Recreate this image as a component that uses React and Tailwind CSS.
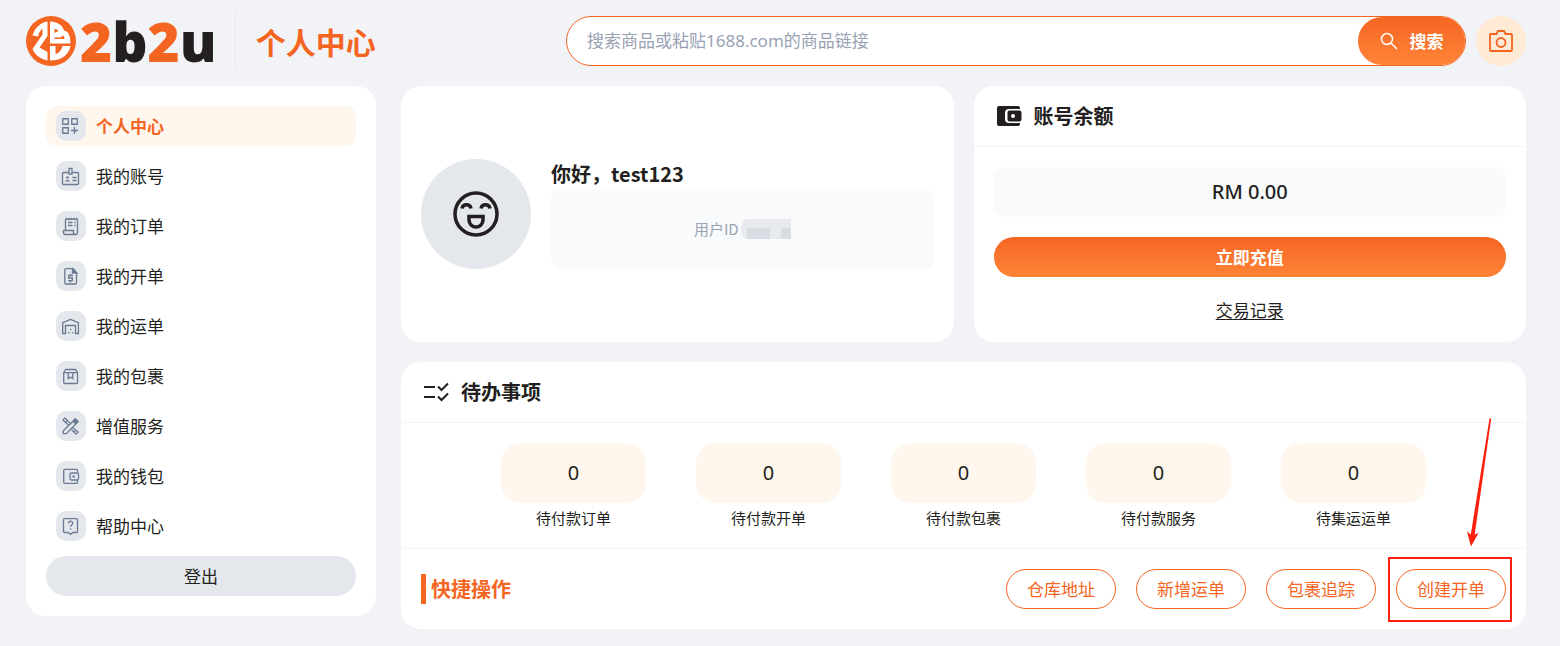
const menu = [
  { label: "个人中心", icon: "dashboard", active: true },
  { label: "我的账号", icon: "badge" },
  { label: "我的订单", icon: "receipt" },
  { label: "我的开单", icon: "invoice" },
  { label: "我的运单", icon: "warehouse" },
  { label: "我的包裹", icon: "parcel" },
  { label: "增值服务", icon: "tools" },
  { label: "我的钱包", icon: "wallet" },
  { label: "帮助中心", icon: "help" },
];

const todos = [
  { label: "待付款订单", count: 0 },
  { label: "待付款开单", count: 0 },
  { label: "待付款包裹", count: 0 },
  { label: "待付款服务", count: 0 },
  { label: "待集运运单", count: 0 },
];

const actions = ["仓库地址", "新增运单", "包裹追踪"];

const menuIcons = {
  dashboard: (
    <path d="M6.75 7.75h5.5v5.5h-5.5zM15.75 7.75h5.5v5.5h-5.5zM6.75 16.75h5.5v5.5h-5.5zM18.5 16v7M15 19.5h7" />
  ),
  badge: (
    <>
      <path d="M12.5 11.5h-5a1 1 0 0 0-1 1v10a1 1 0 0 0 1 1h14a1 1 0 0 0 1-1v-10a1 1 0 0 0-1-1h-5" />
      <path d="M13 7.5h3v5.5h-3zM16.5 16.5h4M16.5 19.5h4" />
      <path d="M9 20.5c0-2 5-2 5 0z" fill="currentColor" stroke="none" />
      <circle cx="11.5" cy="16.5" r="1.3" fill="currentColor" stroke="none" />
    </>
  ),
  receipt: (
    <>
      <path d="M9.5 19.5v-11M21.5 8.5v13a2 2 0 0 1-4 0v-2h-10v2a2 2 0 0 0 2 2h10" />
      <path d="M9.5 8.3h12" />
      <path d="M9.5 7.3h12" strokeDasharray="1.4 1.2" />
      <path d="M12 11.5h4.5M12 14.5h4.5M18.2 11.5h1.3M18.2 14.5h1.3" />
    </>
  ),
  invoice: (
    <>
      <path d="M17 7.7h-7a1.2 1.2 0 0 0-1.2 1.2v12.9a1.2 1.2 0 0 0 1.2 1.2h9.3a1.2 1.2 0 0 0 1.2-1.2V11.5z" />
      <path d="M16.5 7.5v4.5h4.5z" fill="currentColor" />
      <path d="M17 14.5h-4.3v2.5h3.6v2.7h-4.1M14.5 12.8v1.7M14.5 19.7v1.7" />
    </>
  ),
  warehouse: (
    <>
      <path d="M6.7 22.5V11.7l7.8-3.2 7.9 3.2v10.8h-2.9v-8h-10v8z" />
      <path d="M14 18.5h1.4M12 21.7h1.5M15.8 21.7h1.5" />
    </>
  ),
  parcel: (
    <>
      <path d="M7.7 11.5l2-3h9.8l2 3v9.7a1.3 1.3 0 0 1-1.3 1.3H9a1.3 1.3 0 0 1-1.3-1.3zM7.7 11.7h13.8" />
      <path d="M12.2 11.7v6l2.3-1.7 2.3 1.7v-6" />
    </>
  ),
  tools: (
    <>
      <path d="M12.5 14.2L7 8.9 8.9 7l5.4 5.4M16.7 16.7l5.4 4.4-2 2-4.6-4.4M10 11l1.3-1.3M18 21l1.3-1.3" />
      <path d="M7.3 22.7v-3l9.7-9.5 2.8 2.8-9.5 9.7z" />
      <path d="M17.5 9.5l1.8-1.8 2.9 2.9-1.7 1.8z" fill="currentColor" />
    </>
  ),
  wallet: (
    <>
      <path d="M21.5 11.5V9.5a1.2 1.2 0 0 0-1.2-1.2H8.9a1.2 1.2 0 0 0-1.2 1.2v11.6a1.2 1.2 0 0 0 1.2 1.2h11.4a1.2 1.2 0 0 0 1.2-1.2v-2" />
      <rect x="14" y="12" width="8.5" height="7" rx="1.5" />
      <circle cx="17.7" cy="15.5" r="1.2" fill="currentColor" stroke="none" />
    </>
  ),
  help: (
    <>
      <path d="M8.7 7.7h11.6a1.2 1.2 0 0 1 1.2 1.2v11.4a1.2 1.2 0 0 1-1.2 1.2h-3.5l-2.3 2-2.3-2H8.7a1.2 1.2 0 0 1-1.2-1.2V8.9a1.2 1.2 0 0 1 1.2-1.2z" />
      <path d="M12.5 12.5c0-3 4.2-3 4.2-.2 0 1.7-2.1 1.7-2.1 3.5M14.6 17.3v1.4" />
    </>
  ),
};

const MenuIcon = ({ name }) => (
  <span className="flex size-[30px] shrink-0 items-center justify-center rounded-[10px] bg-[#e4e7ec] text-[#6b7a94]">
    <svg viewBox="0 0 30 30" className="size-[30px]" fill="none" stroke="currentColor" strokeWidth="1.3" aria-hidden="true">
      {menuIcons[name]}
    </svg>
  </span>
);

const LogoMark = () => (
  <svg viewBox="0 0 50 50" className="size-[50px] shrink-0" aria-hidden="true">
    <circle cx="25" cy="25" r="25" fill="#f56522" />
    <g fill="#fff">
      {/* left half of the coin */}
      <path d="M6.5 19.5C9 11.5 14.5 6.5 21.5 5.5V20L13.5 31.5 21.5 36V44.5C14.5 43 9 39 6.5 33L16.5 18.5V12.500C14 14.500 12.500 17.500 12 20.500z" />
      {/* upper right lobe */}
      <path fillRule="evenodd" d="M24 5.500C31 5.500 36.500 9 38 14.500 42.500 15 44.500 20 44.500 27.500H24zM28.500 13V17L32.500 15C31.500 13.500 30 13 28.500 13zM28.500 21.500V23H38.500C38.500 21.500 38 20.500 37 19.500L34.500 21.500z" />
      {/* lower right lobe */}
      <path d="M24 30H29.500V38C32.500 37.500 35.500 34.500 36.500 30H44.500C43 38.500 36 44.500 24 44.500z" />
    </g>
  </svg>
);

const Header = () => (
  <header className="flex h-[86px] items-start">
    <div className="flex min-w-[540px] items-center pt-[11px]">
      <a href="#" className="flex items-center gap-1" aria-label="2b2u">
        <LogoMark />
        <span className="font-['Open_Sans'] text-[55px] leading-[60px] font-extrabold text-[#231f20]">
          <span className="text-[#f56522]">2</span>b<span className="text-[#f56522]">2</span>u
        </span>
      </a>
      <h1 className="ml-[18px] flex h-[60px] items-center border-l border-[#e4e7ec] pl-5 text-[30px] font-semibold text-[#f56522]">
        个人中心
      </h1>
    </div>
    <form className="mt-4 flex h-[50px] flex-1 rounded-full border border-[#f56522] bg-white" onSubmit={(e) => e.preventDefault()}>
      <input
        type="text"
        aria-label="搜索商品"
        placeholder="搜索商品或粘贴1688.com的商品链接"
        className="min-w-0 flex-1 rounded-full bg-transparent px-5 font-['Noto_Sans','Noto_Sans_CJK_SC',sans-serif] text-[17px] outline-none placeholder:text-[#98a2b3]"
      />
      <button type="submit" className="flex w-[107px] items-center justify-center gap-3 rounded-full bg-linear-to-b from-[#f56522] to-[#ff8438] text-[17px] font-bold text-white">
        <svg viewBox="0 0 18 18" className="size-[18px]" fill="none" stroke="currentColor" strokeWidth="1.5" aria-hidden="true">
          <circle cx="7" cy="7" r="5.5" />
          <path d="M11 11l6 6" />
        </svg>
        搜索
      </button>
    </form>
    <button type="button" aria-label="图片搜索" className="mt-4 ml-[10px] flex size-[50px] items-center justify-center rounded-full bg-[#ffead5] text-[#f56522]">
      <svg viewBox="0 0 24 22" className="h-[22px] w-6" fill="none" stroke="currentColor" strokeWidth="1.8" aria-hidden="true">
        <path d="M2 4h5.5l1.5-3h6l1.5 3H22a1 1 0 0 1 1 1v15a1 1 0 0 1-1 1H2a1 1 0 0 1-1-1V5a1 1 0 0 1 1-1z" />
        <circle cx="12" cy="12.5" r="4.5" />
      </svg>
    </button>
  </header>
);

const Sidebar = () => (
  <aside className="flex w-[350px] shrink-0 flex-col gap-[10px] rounded-[20px] bg-white p-5">
    <nav className="flex flex-col gap-[10px]">
      {menu.map((item) => (
        <a
          key={item.label}
          href="#"
          className={`flex h-10 items-center gap-[10px] rounded-[10px] px-[10px] text-[17px] ${
            item.active ? "bg-[#fff6ed] font-bold text-[#f56522]" : ""
          }`}
        >
          <MenuIcon name={item.icon} />
          {item.label}
        </a>
      ))}
    </nav>
    <button type="button" className="h-10 rounded-full bg-[#e4e7ec] text-[17px]">
      登出
    </button>
  </aside>
);

const ProfileCard = () => (
  <section className="flex items-center gap-5 rounded-[20px] bg-white p-5">
    <div className="flex size-[110px] shrink-0 items-center justify-center rounded-full bg-[#e4e7ec]">
      <svg viewBox="-23 -23 46 46" className="size-[46px]" fill="none" stroke="#231f20" strokeWidth="3.5" aria-hidden="true">
        <circle r="21" />
        <path d="M-14-5.5a4.6 4.6 0 0 1 9 0M5-5.5a4.6 4.6 0 0 1 9 0" />
        <path d="M-7 2.5H7V6a7 7 0 0 1-14 0z" />
      </svg>
    </div>
    <div className="min-w-0 flex-1">
      <h2 className="text-[20px] leading-[30px] font-semibold">你好，test123</h2>
      <div className="flex h-20 items-center justify-center gap-[2px] rounded-[10px] bg-[#f9fafb] text-[15px] text-[#98a2b3]">
        用户ID
        <svg viewBox="0 0 50 20" className="h-5 w-[50px]" aria-hidden="true">
          <path d="M6 0h44v20H6a6 10 0 0 1 0-20z" fill="#e8eaee" />
          <path d="M6 9h23v11H6zM40 9h10v11H40z" fill="#d8dce3" />
        </svg>
      </div>
    </div>
  </section>
);

const BalanceCard = () => (
  <section className="rounded-[20px] bg-white">
    <div className="flex h-[61px] items-center gap-[10px] border-b border-[#f2f4f7] px-5">
      <svg viewBox="0 0 30 30" className="size-[30px]" aria-hidden="true">
        <path d="M5 5h19a2 2 0 0 1 2 2v1H15a4 4 0 0 0-4 4v6a4 4 0 0 0 4 4h11v1a2 2 0 0 1-2 2H5a2 2 0 0 1-2-2V7a2 2 0 0 1 2-2z" fill="#231f20" />
        <path fillRule="evenodd" d="M15.5 9.5h10a2 2 0 0 1 2 2v7a2 2 0 0 1-2 2h-10a2 2 0 0 1-2-2v-7a2 2 0 0 1 2-2zM19 13a2 2 0 1 0 0 4 2 2 0 0 0 0-4z" fill="#231f20" />
      </svg>
      <h2 className="text-[20px] font-semibold">账号余额</h2>
    </div>
    <div className="flex flex-col gap-5 p-5">
      <div className="flex h-[50px] items-center justify-center rounded-[10px] bg-[#f9fafb] font-['Noto_Sans'] text-[20px] font-medium">RM 0.00</div>
      <button type="button" className="h-10 rounded-full bg-linear-to-b from-[#f56522] to-[#ff8438] text-[17px] font-bold text-white">
        立即充值
      </button>
      <a href="#" className="self-center text-[17px] leading-[25px] underline underline-offset-2">
        交易记录
      </a>
    </div>
  </section>
);

const TodoCard = () => (
  <section className="rounded-[20px] bg-white">
    <div className="flex h-[61px] items-center gap-[10px] border-b border-[#f2f4f7] px-5">
      <svg viewBox="0 0 30 30" className="size-[30px]" fill="none" stroke="#231f20" strokeWidth="2" aria-hidden="true">
        <path d="M3 10h11M3 20h11M17 9.5l3.5 3.5 6.5-6.5M17 19.5l3.5 3.5 6.5-6.5" />
      </svg>
      <h2 className="text-[20px] font-semibold">待办事项</h2>
    </div>
    <div className="flex justify-center gap-[50px] border-b border-[#f2f4f7] pt-5 pb-[15px]">
      {todos.map((todo) => (
        <a key={todo.label} href="#" className="w-[145px] text-center">
          <span className="flex h-[60px] items-center justify-center rounded-[20px] bg-[#fff6ed] font-['Noto_Sans'] text-[20px]">{todo.count}</span>
          <span className="block text-[15px] leading-[30px]">{todo.label}</span>
        </a>
      ))}
    </div>
    <div className="flex items-center gap-5 p-5">
      <h2 className="mr-auto border-l-[5px] border-[#f56522] pl-[5px] text-[20px] leading-[30px] font-semibold text-[#f56522]">快捷操作</h2>
      {actions.map((label) => (
        <button key={label} type="button" className="h-10 w-[110px] rounded-full border border-[#f56522] text-[17px] text-[#f56522]">
          {label}
        </button>
      ))}
      <div className="relative">
        <button type="button" className="h-10 w-[110px] rounded-full border border-[#f56522] text-[17px] text-[#f56522]">
          创建开单
        </button>
        {/* Callout pointing at the create button */}
        <div className="pointer-events-none absolute -top-3 -right-[6px] -bottom-[13px] -left-2 border-2 border-[#ff1f0f]" />
        <svg viewBox="0 0 26 130" className="pointer-events-none absolute right-[14px] bottom-[62px] h-[130px] w-[26px]" fill="#ff1f0f" aria-hidden="true">
          <path d="M23.5 1.5h1.7L8.7 117.5l3.8-1.5L5 129.5 1 114.5l3.8 3z" />
        </svg>
      </div>
    </div>
  </section>
);

const App = () => {
  return (
    <div className="min-h-screen bg-[#f1f3f7] pr-[34px] pb-4 pl-[26px] font-['Noto_Sans_CJK_SC','Noto_Sans',sans-serif] text-[#231f20]">
      <Header />
      <div className="flex items-start gap-[25px]">
        <Sidebar />
        <main className="flex min-w-0 flex-1 flex-col gap-5">
          <div className="grid grid-cols-2 gap-5">
            <ProfileCard />
            <BalanceCard />
          </div>
          <TodoCard />
        </main>
      </div>
    </div>
  );
};

export default App;
